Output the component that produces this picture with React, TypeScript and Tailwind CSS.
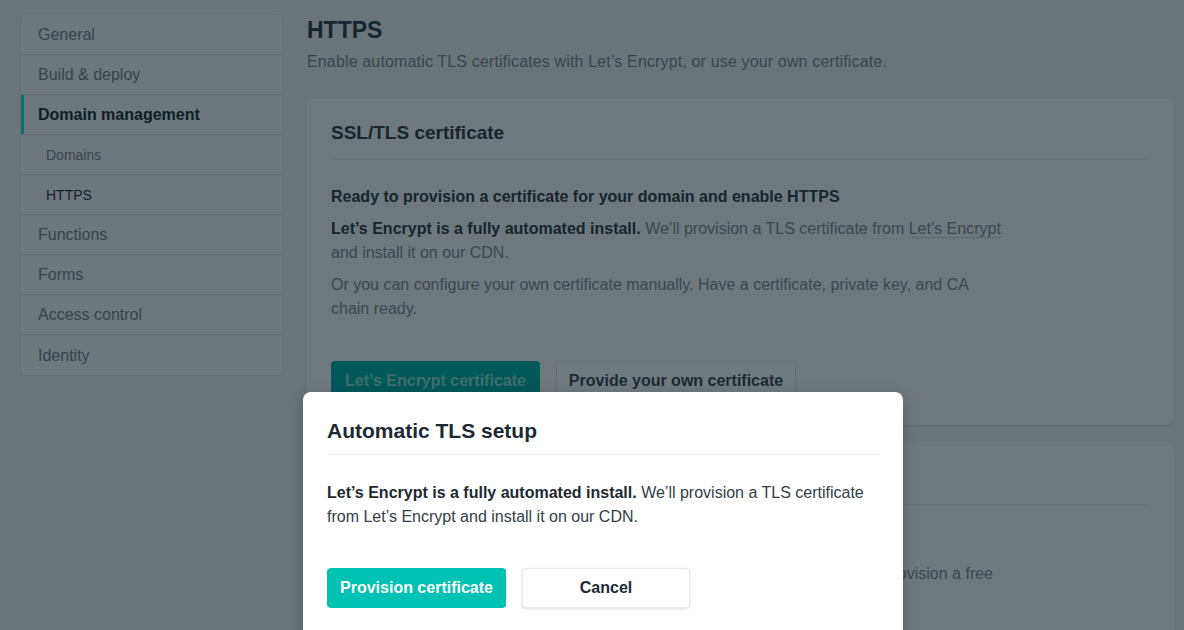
import React from "react";

const font = { fontFamily: '"Liberation Sans", Arial, sans-serif' };

function SideItem({ label, sub, active, strong, last }: { label: string; sub?: boolean; active?: boolean; strong?: boolean; last?: boolean }) {
  return (
    <div
      className={`h-[40px] flex items-center pt-[1px] ${last ? "" : "border-b border-[#646e73]"} ${
        active ? "border-l-[3px] border-l-[#04736c] pl-[14px]" : sub ? "pl-[25px]" : "pl-[17px]"
      }`}
    >
      <span
        className={`${sub ? "text-[14px]" : "text-[16px]"} ${
          active ? "font-bold text-[#0f1d24]" : strong ? "text-[#122128]" : "text-[#38444a]"
        }`}
      >
        {label}
      </span>
    </div>
  );
}

export default function App() {
  return (
    <div style={font} className="relative w-[1184px] h-[630px] overflow-hidden bg-[#6a7479]">
      <div className="flex gap-[24px] pl-[20px] pt-[14px]">
        {/* Sidebar */}
        <div className="w-[263px] shrink-0">
          <div className="rounded-[4px] border border-[#646e73] bg-[#6d777c] overflow-hidden">
            <SideItem label="General" />
            <SideItem label="Build & deploy" />
            <SideItem label="Domain management" active />
            <SideItem label="Domains" sub />
            <SideItem label="HTTPS" sub strong />
            <SideItem label="Functions" />
            <SideItem label="Forms" />
            <SideItem label="Access control" />
            <SideItem label="Identity" last />
          </div>
        </div>

        {/* Main */}
        <div className="w-[867px] shrink-0">
          <h1 className="text-[23px] leading-[28px] font-bold text-[#17252c] mt-[2px]">HTTPS</h1>
          <p className="text-[16px] leading-[24px] text-[#3a464c] mt-[6px] tracking-[0.15px]">
            Enable automatic TLS certificates with Let’s Encrypt, or use your own certificate.
          </p>

          <div className="mt-[25px] rounded-[8px] bg-[#6e787d] shadow-[0_1px_2px_rgba(0,0,0,0.08)] px-[24px] pt-[22px] pb-[24px]">
            <h2 className="text-[19px] leading-[24px] font-bold text-[#17252c]">SSL/TLS certificate</h2>
            <div className="mt-[14px] h-px bg-[#667075]" />
            <p className="mt-[25px] text-[16px] leading-[24px] font-bold text-[#17252c]">
              Ready to provision a certificate for your domain and enable HTTPS
            </p>
            <p className="mt-[8px] text-[16px] leading-[24px] text-[#3c474d] max-w-[672px]">
              <span className="font-bold text-[#17252c]">Let’s Encrypt is a fully automated install.</span> We’ll provision a TLS
              certificate from <span className="border-b border-[#5e686d]">Let’s Encrypt</span> and install it on our CDN.
            </p>
            <p className="mt-[8px] text-[16px] leading-[24px] text-[#3c474d] max-w-[672px]">
              Or you can configure your own certificate manually. Have a certificate, private key, and CA chain ready.
            </p>
            <div className="mt-[40px] flex gap-[16px]">
              <div className="h-[40px] w-[209px] rounded-[4px] bg-[#03585a] flex items-center justify-center text-[16px] font-bold text-[#3f6e70]">
                Let’s Encrypt certificate
              </div>
              <div className="h-[40px] w-[240px] rounded-[4px] border border-[#646e73] bg-[#6f797e] flex items-center justify-center text-[16px] font-bold text-[#1d2b31]">
                Provide your own certificate
              </div>
            </div>
          </div>

          <div className="mt-[17px] h-[300px] rounded-[8px] bg-[#6e787d] px-[24px] pt-[62px]">
            <div className="h-px bg-[#667075]" />
            <div className="mt-[57px] flex justify-end pr-[157px]">
              <p className="text-[16px] leading-[24px] text-[#3c474d] whitespace-nowrap">provision a free</p>
            </div>
          </div>
        </div>
      </div>

      {/* Modal */}
      <div className="absolute left-[303px] top-[392px] w-[600px] h-[260px] rounded-[8px] bg-white shadow-[0_4px_16px_rgba(0,0,0,0.2)] px-[24px] pt-[25px]">
        <h3 className="text-[21px] leading-[28px] font-bold text-[#1e2a31]">Automatic TLS setup</h3>
        <div className="mt-[9px] h-px bg-[#eef0f1]" />
        <p className="mt-[26px] text-[16px] leading-[24px] text-[#333e45] max-w-[545px]">
          <span className="font-bold text-[#1e2a31]">Let’s Encrypt is a fully automated install.</span> We’ll provision a TLS
          certificate from Let’s Encrypt and install it on our CDN.
        </p>
        <div className="mt-[39px] flex gap-[16px]">
          <div className="h-[40px] w-[179px] rounded-[4px] bg-[#00c2b2] flex items-center justify-center text-[16px] font-bold text-white">
            Provision certificate
          </div>
          <div className="h-[40px] w-[168px] rounded-[4px] bg-white border border-[#e6e9eb] shadow-[0_1px_3px_rgba(0,0,0,0.12)] flex items-center justify-center text-[16px] font-bold text-[#1e2a31]">
            Cancel
          </div>
        </div>
      </div>
    </div>
  );
}
